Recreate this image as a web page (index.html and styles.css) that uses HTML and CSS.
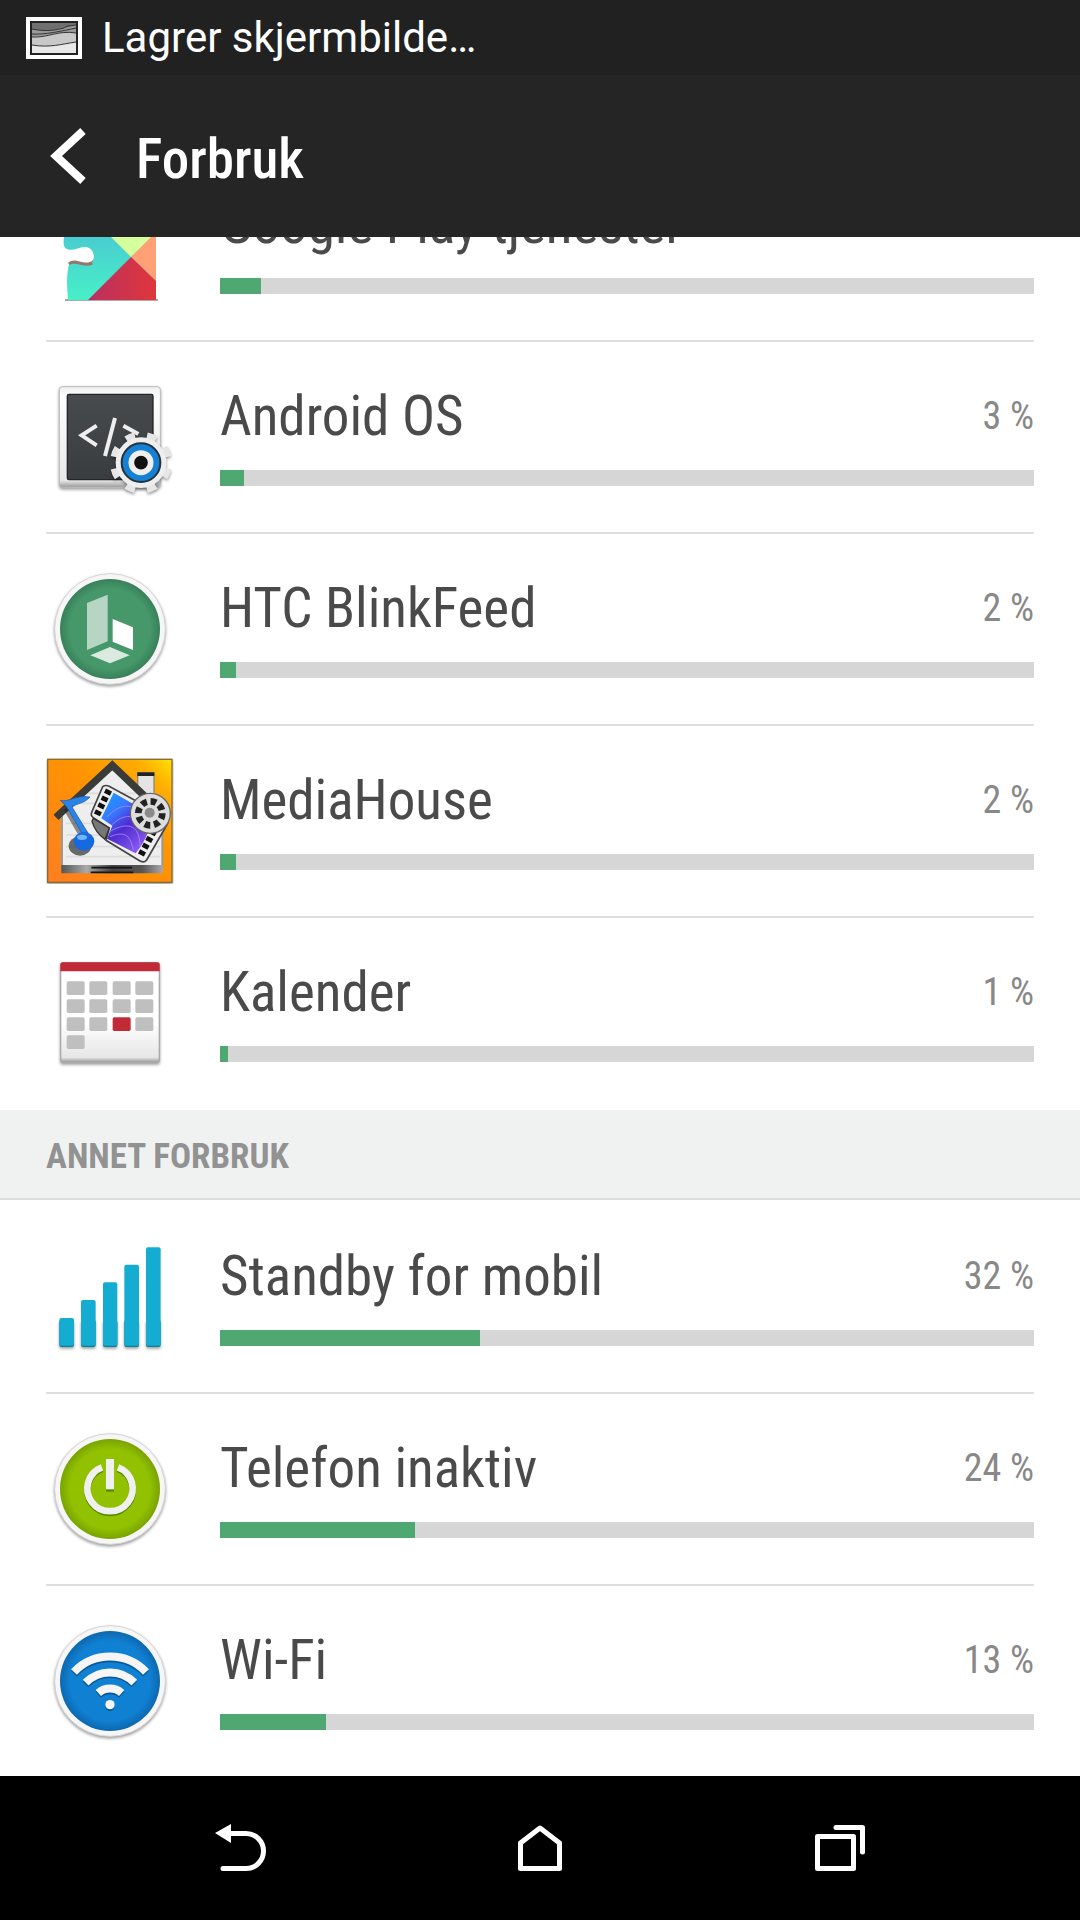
FILE: index.html
```html
<!DOCTYPE html>
<html lang="nb">
<head>
<meta charset="utf-8">
<meta name="viewport" content="width=device-width, initial-scale=1">
<title>Forbruk</title>
<link rel="stylesheet" href="styles.css">
</head>
<body>
<div class="status">
  <svg class="status-icon" viewBox="0 0 56 42" aria-hidden="true">
    <rect x="2" y="2" width="52" height="38" fill="#222" stroke="#fff" stroke-width="4"/>
    <rect x="6" y="6" width="44" height="30" fill="#707070"/>
    <path d="M6 12C18 15 32 13 50 8V36H6Z" fill="#999"/>
    <path d="M6 20C22 20 32 13 50 16V36H6Z" fill="#c8c8c8"/>
    <path d="M6 28C20 31 36 27 50 25V36H6Z" fill="#e8e8e8"/>
    <path d="M6 12C20 15 30 13 38 11 42 8 46 9 50 8M6 17C18 18 36 14 50 11M6 20C22 21 32 13 50 16M6 28C24 31 36 27 50 25" fill="none" stroke="#333"/>
    <rect x="5" y="5" width="46" height="32" fill="none" stroke="#222" stroke-width="2"/>
  </svg>
  <span>Lagrer skjermbilde…</span>
</div>

<header class="bar">
  <button class="up" aria-label="Tilbake">
    <svg viewBox="0 0 44 64"><path d="M37 7L10 32L37 57" fill="none" stroke="#fff" stroke-width="8"/></svg>
  </button>
  <h1>Forbruk</h1>
</header>

<main class="content">
  <ul class="list">
    <li class="row">
      <svg class="icon" viewBox="0 0 128 128" aria-hidden="true">
        <defs><linearGradient id="teal" x2="0" y2="1"><stop stop-color="#4bb8d4"/><stop offset="1" stop-color="#47f0c8"/></linearGradient>
        <linearGradient id="red" x2="1" y2="0"><stop stop-color="#b83060"/><stop offset="1" stop-color="#e0363c"/></linearGradient></defs>
        <path d="M19 120H112" stroke="#555" stroke-width="2" opacity=".5"/>
        <path d="M23 83C30 86 41 91 47 82L48 78C45 86 33 82 26 81Z" fill="#927a70"/>
        <path d="M18 20H110V120H22C21 108 20 97 23 84C28 78 40 88 46 83C50 76 47 68 40 67C33 66 28 72 21 69C16 67 18 60 18 55Z" fill="url(#teal)"/>
        <path d="M23 84C28 78 40 88 46 83" fill="none" stroke="#927a70" stroke-width="3"/>
        <path d="M28 20H110V54L85 77Z" fill="#d6ff9e"/>
        <path d="M85 77L110 52V101Z" fill="#ffa077"/>
        <path d="M42 120L85 77L110 101V120Z" fill="url(#red)"/>
      </svg>
      <div class="info">
        <div class="line"><span class="name">Google Play-tjenester</span><span class="pct">5 %</span></div>
        <progress max="100" value="5" aria-label="Google Play-tjenester"></progress>
      </div>
    </li>
    <li class="row">
      <svg class="icon" viewBox="48 6 384 384" aria-hidden="true">
        <defs><linearGradient id="frame" x2="0" y2="1"><stop stop-color="#eee"/><stop offset=".1" stop-color="#fff"/><stop offset=".93" stop-color="#e8e8e8"/><stop offset="1" stop-color="#999"/></linearGradient>
        <linearGradient id="slate" x2="0" y2="1"><stop stop-color="#484b4e"/><stop offset="1" stop-color="#393d40"/></linearGradient></defs>
        <rect class="drop" x="88" y="50" width="303" height="302" rx="9" fill="url(#frame)" stroke="#bbb" stroke-width="3"/>
        <rect x="112" y="73" width="257" height="256" rx="5" fill="url(#slate)" stroke="#222629" stroke-width="4"/>
        <path d="M200 167L155 196L200 226M280 167L325 192M255 144L225 258" fill="none" stroke="#eee" stroke-width="12"/>
        <g class="drop">
          <circle cx="333" cy="278" r="82" fill="none" stroke="#e6e6e6" stroke-width="22" pathLength="80" stroke-dasharray="4.4 5.6" stroke-dashoffset="-2.8"/>
          <circle cx="333" cy="278" r="76" fill="#eee"/>
        </g>
        <circle cx="333" cy="278" r="58" fill="#1481d5" stroke="#26333e" stroke-width="6"/>
        <circle cx="333" cy="278" r="29" fill="#111" stroke="#eee" stroke-width="17"/>
      </svg>
      <div class="info">
        <div class="line"><span class="name">Android OS</span><span class="pct">3 %</span></div>
        <progress max="100" value="3" aria-label="Android OS"></progress>
      </div>
    </li>
    <li class="row">
      <svg class="icon" viewBox="48 12 384 384" aria-hidden="true">
        <defs><radialGradient id="green"><stop offset=".8" stop-color="#46986a"/><stop offset="1" stop-color="#39805a"/></radialGradient></defs>
        <circle class="drop" cx="240" cy="207" r="166" fill="#f6f6f6" stroke="#d5d5d5" stroke-width="3"/>
        <circle cx="240" cy="207" r="150" fill="url(#green)"/>
        <path d="M171 129L233 104V244L171 270Z" fill="#b7d5c3"/>
        <path d="M248 177L309 202V270L248 245Z" fill="#fff"/>
        <path d="M181 286L240 261L299 286L240 310Z" fill="#dbeae1"/>
      </svg>
      <div class="info">
        <div class="line"><span class="name">HTC BlinkFeed</span><span class="pct">2 %</span></div>
        <progress max="100" value="2" aria-label="HTC BlinkFeed"></progress>
      </div>
    </li>
    <li class="row">
      <svg class="icon" viewBox="48 48 384 384" aria-hidden="true">
        <defs><linearGradient id="sun" x1="0" y1="1" x2="1" y2="0"><stop stop-color="#ff7d20"/><stop offset=".6" stop-color="#ff9500"/><stop offset=".85" stop-color="#ffad00"/><stop offset="1" stop-color="#ffe100"/></linearGradient>
        <linearGradient id="film" x2=".7" y2="1"><stop stop-color="#14a4ff"/><stop offset=".35" stop-color="#3777ff"/><stop offset=".6" stop-color="#502bd0"/><stop offset="1" stop-color="#8b5cf0"/></linearGradient>
        <linearGradient id="sill"><stop stop-color="#555"/><stop offset=".25" stop-color="#aaa"/><stop offset=".5" stop-color="#444"/><stop offset=".8" stop-color="#555"/><stop offset="1" stop-color="#aaa"/></linearGradient></defs>
        <rect class="drop" x="53" y="58" width="373" height="369" fill="url(#sun)" stroke="#8a6b35" stroke-width="4"/>
        <path d="M323 98H372V170H323Z" fill="#e4e4e4" stroke="#888" stroke-width="4"/>
        <path d="M322 97H373V108H322Z" fill="#222"/>
        <path d="M247 80L397 215V382H96V215Z" fill="#eee" stroke="#999" stroke-width="6"/>
        <path d="M108 250H390M108 285H390M108 320H390M108 350H390M165 160H330M135 190H360" stroke="#ddd" stroke-width="5"/>
        <path d="M78 232L247 76L400 222" fill="none" stroke="#3b3b38" stroke-width="22"/>
        <path d="M94 375H398V400H94Z" fill="url(#sill)"/>
        <path d="M184 383H306M182 397H310" stroke="#151515" stroke-width="5"/>
        <path d="M218 140Q226 134 236 138L408 232Q420 240 412 252L350 360Q342 370 330 363L228 301L238 264L190 233Q180 226 186 215Z" fill="#eee" stroke="#444" stroke-width="5"/>
        <path d="M190 235L238 264L225 298Q196 278 186 244Z" fill="#777" stroke="#333" stroke-width="4"/>
        <path d="M251 158L362 222Q365 280 317 340L231 296L247 257L214 235Z" fill="url(#film)"/>
        <path d="M232 230C270 190 300 190 350 220M238 275C300 240 330 260 330 320M240 290C290 270 300 290 310 330M245 255C280 220 320 220 350 260" fill="none" stroke="#a98bff" stroke-width="3" opacity=".8"/>
        <path d="M237 150L200 226M372 272L329 352" stroke="#111" stroke-width="20" stroke-dasharray="14 9" fill="none"/>
        <circle cx="361" cy="220" r="60" fill="#ddd" stroke="#666" stroke-width="4"/>
        <circle cx="361" cy="220" r="36" fill="none" stroke="#222" stroke-width="20" pathLength="80" stroke-dasharray="6 4"/>
        <circle cx="359" cy="218" r="15" fill="#8a8a8a"/>
        <ellipse cx="150" cy="318" rx="34" ry="29" fill="#222" opacity=".65"/>
        <path d="M108 205L159 293" stroke="#222" stroke-width="16" opacity=".5"/>
        <path d="M91 181C115 188 139 163 180 171C160 193 143 188 126 201L174 279L157 282L111 202Z" fill="#2b83e8" stroke="#1756a8" stroke-width="2"/>
        <ellipse cx="162" cy="304" rx="31" ry="28" fill="#1769e0"/>
        <ellipse cx="156" cy="292" rx="15" ry="8" fill="#71b4ff"/>
      </svg>
      <div class="info">
        <div class="line"><span class="name">MediaHouse</span><span class="pct">2 %</span></div>
        <progress max="100" value="2" aria-label="MediaHouse"></progress>
      </div>
    </li>
    <li class="row">
      <svg class="icon" viewBox="48 24 384 384" aria-hidden="true">
        <defs><linearGradient id="page" x2="0" y2="1"><stop offset=".6" stop-color="#fff"/><stop offset=".95" stop-color="#e6e6e6"/><stop offset="1" stop-color="#999"/></linearGradient></defs>
        <rect class="drop" x="92" y="68" width="296" height="299" rx="8" fill="url(#page)" stroke="#aaa" stroke-width="4"/>
        <path d="M91 94V75Q91 67 99 67H381Q389 67 389 75V94Z" fill="#c02b37"/>
        <g fill="#bfbfbf">
          <rect x="110" y="124" width="54" height="41" rx="5"/><rect x="178" y="124" width="54" height="41" rx="5"/><rect x="248" y="124" width="54" height="41" rx="5"/><rect x="316" y="124" width="54" height="41" rx="5"/>
          <rect x="110" y="178" width="54" height="41" rx="5"/><rect x="178" y="178" width="54" height="41" rx="5"/><rect x="248" y="178" width="54" height="41" rx="5"/><rect x="316" y="178" width="54" height="41" rx="5"/>
          <rect x="110" y="232" width="54" height="41" rx="5"/><rect x="178" y="232" width="54" height="41" rx="5"/><rect x="248" y="232" width="54" height="41" rx="5" fill="#c02b37"/><rect x="316" y="232" width="54" height="41" rx="5"/>
          <rect x="110" y="286" width="54" height="41" rx="5"/>
        </g>
      </svg>
      <div class="info">
        <div class="line"><span class="name">Kalender</span><span class="pct">1 %</span></div>
        <progress max="100" value="1" aria-label="Kalender"></progress>
      </div>
    </li>
  </ul>

  <h2 class="section">ANNET FORBRUK</h2>

  <ul class="list">
    <li class="row">
      <svg class="icon" viewBox="48 6 384 384" aria-hidden="true">
        <g class="drop" fill="#0c7f9d">
          <rect x="88" y="270" width="44" height="81" rx="6"/><rect x="153" y="270" width="44" height="81" rx="6"/><rect x="219" y="270" width="43" height="81" rx="6"/><rect x="283" y="270" width="44" height="81" rx="6"/><rect x="348" y="270" width="44" height="81" rx="6"/>
        </g>
        <g fill="#14acd0">
          <rect x="88" y="264" width="44" height="83" rx="6"/><rect x="153" y="210" width="44" height="137" rx="6"/><rect x="219" y="157" width="43" height="190" rx="6"/><rect x="283" y="104" width="44" height="243" rx="6"/><rect x="348" y="52" width="44" height="295" rx="6"/>
        </g>
      </svg>
      <div class="info">
        <div class="line"><span class="name">Standby for mobil</span><span class="pct">32 %</span></div>
        <progress max="100" value="32" aria-label="Standby for mobil"></progress>
      </div>
    </li>
    <li class="row">
      <svg class="icon" viewBox="48 42 384 384" aria-hidden="true">
        <defs><radialGradient id="lime"><stop offset=".8" stop-color="#92c100"/><stop offset="1" stop-color="#79a300"/></radialGradient></defs>
        <circle class="drop" cx="240" cy="237" r="166" fill="#f6f6f6" stroke="#d5d5d5" stroke-width="3"/>
        <circle cx="240" cy="237" r="150" fill="url(#lime)"/>
        <g fill="none" stroke="#588a00"><path d="M216 177A68 68 0 1 0 264 177" stroke-width="20"/><path d="M240 154V245" stroke-width="24"/></g>
        <g fill="none" stroke="#f0f0f0"><path d="M216 172A68 68 0 1 0 264 172" stroke-width="20"/><path d="M240 147V238" stroke-width="24"/></g>
      </svg>
      <div class="info">
        <div class="line"><span class="name">Telefon inaktiv</span><span class="pct">24 %</span></div>
        <progress max="100" value="24" aria-label="Telefon inaktiv"></progress>
      </div>
    </li>
    <li class="row">
      <svg class="icon" viewBox="48 48 384 384" aria-hidden="true">
        <defs><radialGradient id="blue"><stop offset=".8" stop-color="#1080d3"/><stop offset="1" stop-color="#0d68ae"/></radialGradient></defs>
        <circle class="drop" cx="240" cy="243" r="166" fill="#f6f6f6" stroke="#d5d5d5" stroke-width="3"/>
        <circle cx="240" cy="243" r="150" fill="url(#blue)"/>
        <g fill="none" stroke="#075796" stroke-width="24"><path d="M132 221A149 149 0 0 1 348 221M167 253A102 102 0 0 1 313 253M205 284A53 53 0 0 1 275 284"/><circle cx="240" cy="319" r="14" fill="#075796" stroke="none"/></g>
        <g fill="none" stroke="#f5f5f5" stroke-width="24"><path d="M132 216A149 149 0 0 1 348 216M167 248A102 102 0 0 1 313 248M205 279A53 53 0 0 1 275 279"/><circle cx="240" cy="314" r="14" fill="#f5f5f5" stroke="none"/></g>
      </svg>
      <div class="info">
        <div class="line"><span class="name">Wi-Fi</span><span class="pct">13 %</span></div>
        <progress max="100" value="13" aria-label="Wi-Fi"></progress>
      </div>
    </li>
  </ul>
</main>

<nav class="nav">
  <button aria-label="Tilbake"><svg viewBox="0 0 64 64"><path d="M7 17L23 8V27Z" fill="#fff"/><path d="M20 17.500H38A17.500 17.500 0 0 1 38 52.500H15" fill="none" stroke="#fff" stroke-width="5" stroke-linecap="round"/></svg></button>
  <button aria-label="Hjem"><svg viewBox="0 0 64 64"><path d="M32 12L51.500 27V52.500H12.500V27Z" fill="none" stroke="#fff" stroke-width="5" stroke-linejoin="round"/></svg></button>
  <button aria-label="Siste apper"><svg viewBox="0 0 64 64"><g fill="none" stroke="#fff" stroke-width="5" stroke-linejoin="round" stroke-linecap="round"><rect x="9.500" y="20.500" width="36" height="32"/><path d="M28 11.500H54.500V36"/></g></svg></button>
</nav>
</body>
</html>
```

FILE: styles.css
```css
* { box-sizing: border-box; }

body {
  margin: 0;
  height: 100vh;
  display: flex;
  flex-direction: column;
  background: #fff;
  color: #4a4a4a;
  font-family: "Roboto Condensed", "Liberation Sans Narrow", Roboto, sans-serif;
}

button {
  padding: 0;
  border: 0;
  background: none;
}

svg { display: block; }

.status {
  flex: none;
  display: flex;
  align-items: center;
  gap: 20px;
  height: 75px;
  padding: 0 26px;
  background: #212121;
  color: #fff;
  font: 42px/50px Roboto, sans-serif;
}

.status-icon { width: 56px; height: 42px; }

.bar {
  flex: none;
  display: flex;
  align-items: center;
  gap: 46px;
  height: 162px;
  padding: 0 46px;
  background: #252525;
  color: #fff;
}

.up svg { width: 44px; height: 64px; }

.bar h1 {
  margin: 0;
  padding-top: 6px;
  font-size: 55px;
  font-weight: 500;
  line-height: 70px;
}

/* The list is scrolled to its end, so the first row is cut by the title bar. */
.content {
  flex: 1;
  min-height: 0;
  display: flex;
  flex-direction: column;
  justify-content: flex-end;
  overflow: hidden;
}

.list {
  flex: none;
  margin: 0;
  padding: 0 46px;
  list-style: none;
}

.row {
  display: flex;
  align-items: center;
  gap: 46px;
  border-top: 2px solid #dedede;
}

.row:first-child { border-top-color: transparent; }

.icon {
  flex: none;
  width: 128px;
  height: 128px;
  margin-bottom: 2px;
}

.drop { filter: drop-shadow(0 5px 4px rgba(0, 0, 0, .4)); }

.info {
  flex: 1;
  min-width: 0;
  padding: 39px 0 46px;
}

.line {
  display: flex;
  align-items: center;
  justify-content: space-between;
  margin-bottom: 19px;
}

.name {
  font-size: 55px;
  line-height: 70px;
  white-space: nowrap;
}

.pct {
  color: #888;
  font-size: 38px;
  line-height: 48px;
}

progress {
  display: block;
  width: 100%;
  height: 16px;
  border: 0;
  background: #d6d6d6;
  appearance: none;
}

progress::-webkit-progress-bar { background: #d6d6d6; }
progress::-webkit-progress-value { background: #4fa771; }
progress::-moz-progress-bar { background: #4fa771; }

.section {
  flex: none;
  margin: 2px 0 0;
  padding: 25px 46px 19px;
  border-bottom: 2px solid #dedede;
  background: #f0f2f1;
  color: #929292;
  font-size: 35px;
  font-weight: 700;
  line-height: 44px;
}

.nav {
  flex: none;
  display: flex;
  height: 144px;
  padding: 0 90px;
  background: #000;
}

.nav button {
  flex: 1;
  display: flex;
  align-items: center;
  justify-content: center;
}

.nav svg { width: 64px; height: 64px; }
```
